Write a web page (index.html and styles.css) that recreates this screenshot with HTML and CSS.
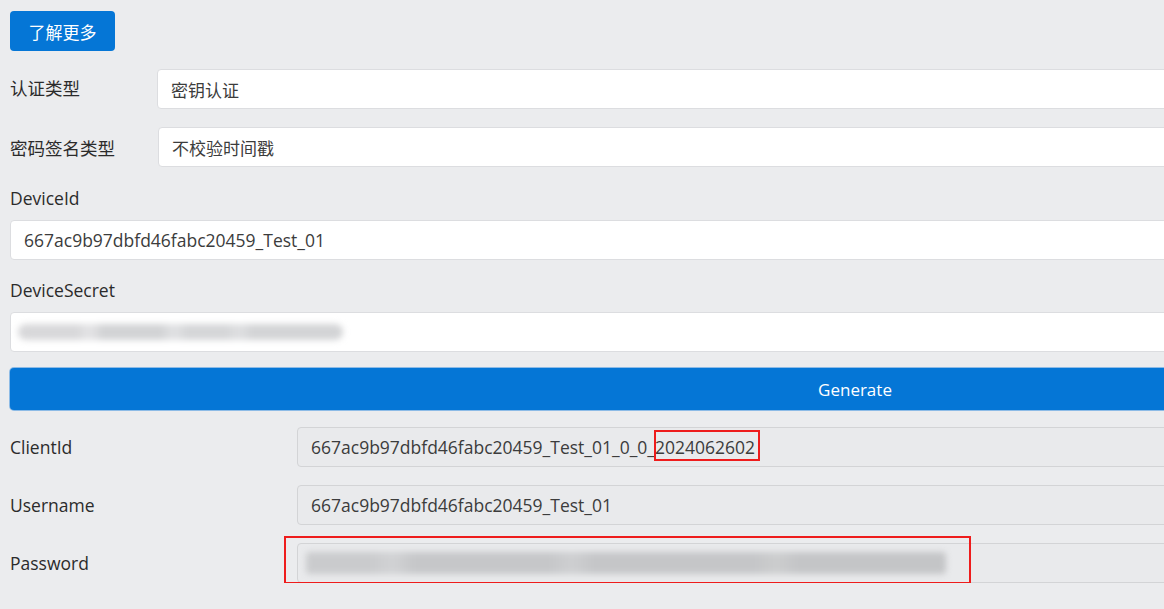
FILE: index.html
```html
<!DOCTYPE html>
<html lang="zh-CN">
<head>
    <meta charset="UTF-8">
    <meta name="viewport" content="width=device-width, initial-scale=1.0">
    <title>MQTT 签名生成</title>
    <link rel="stylesheet" href="styles.css">
</head>
<body>
<div class="page">
    <button class="btn btn-more" type="button">了解更多</button>

    <div class="row row-auth">
        <label class="row-label" for="authType">认证类型</label>
        <input class="field" id="authType" value="密钥认证" readonly>
    </div>
    <div class="row row-sign">
        <label class="row-label" for="signType">密码签名类型</label>
        <input class="field" id="signType" value="不校验时间戳" readonly>
    </div>

    <label class="block-label first" for="deviceId">DeviceId</label>
    <input class="field" id="deviceId" value="667ac9b97dbfd46fabc20459_Test_01">

    <label class="block-label" for="deviceSecret">DeviceSecret</label>
    <div class="field secret">
        <span class="smudge smudge-secret"></span>
    </div>

    <button class="btn btn-generate" type="button">Generate</button>

    <div class="row result">
        <label class="row-label" for="clientId">ClientId</label>
        <div class="field field-ro" id="clientId">667ac9b97dbfd46fabc20459_Test_01_0_0_<span class="mark">2024062602</span></div>
    </div>
    <div class="row result">
        <label class="row-label" for="username">Username</label>
        <div class="field field-ro" id="username">667ac9b97dbfd46fabc20459_Test_01</div>
    </div>
    <div class="row result">
        <label class="row-label" for="password">Password</label>
        <div class="field field-ro pwd" id="password">
            <span class="smudge smudge-pwd"></span>
            <span class="pwd-mark"></span>
        </div>
    </div>
</div>
</body>
</html>
```

FILE: styles.css
```css
html, body {
    margin: 0;
    overflow: hidden;
}

body {
    background-color: #ebecee;
    font-family: "Open Sans", "Noto Sans CJK SC", sans-serif;
    font-size: 17.5px;
    color: #2b2b2b;
}

.page {
    width: 1690px;
    padding: 11px 0 0 10px;
    display: flex;
    flex-direction: column;
    align-items: flex-start;
}

.btn {
    border: none;
    border-radius: 4px;
    background-color: #0576d6;
    color: #fff;
    font-family: inherit;
    font-size: 17px;
    cursor: pointer;
}

.btn-more {
    width: 105px;
    height: 40px;
}

.row {
    display: flex;
    align-items: center;
    width: 100%;
    margin-top: 18px;
}

.row-label {
    flex: 0 0 147px;
    font-size: 17.5px;
}

.row-auth .row-label {
    margin-top: -3px;
}

.row-sign .row-label {
    flex-basis: 148px;
}

.field {
    box-sizing: border-box;
    flex: 1;
    width: 100%;
    height: 40px;
    padding: 0 13px;
    border: 1px solid #dcdde0;
    border-radius: 4px;
    background-color: #fff;
    color: #3c3c3c;
    font-family: inherit;
    font-size: 17.5px;
    outline: none;
    display: flex;
    align-items: center;
}

.row-auth .field,
.row-sign .field {
    font-size: 17px;
}

.block-label {
    margin: 18px 0 10px;
    line-height: 24px;
}

.block-label.first {
    margin-top: 19px;
}

.block-label + .field {
    flex: none;
}

.secret {
    position: relative;
    padding-left: 7px;
}

/* blurred-out secret values */
.smudge {
    display: block;
    border-radius: 8px;
    filter: blur(3px);
}

.smudge-secret {
    width: 325px;
    height: 16px;
    background: linear-gradient(90deg, #d8d8da 0 18%, #e2e2e4 21% 23%, #d2d3d5 26% 44%, #dfe0e2 47% 49%, #d5d6d8 52% 64%, #dddee0 67% 69%, #d3d4d6 72% 100%);
}

.btn-generate {
    width: 100%;
    height: 42px;
    margin-top: 16px;
    box-shadow: 0 0 0 1px #8dbbe6;
}

.row.result {
    margin-top: 18px;
}

.result .row-label {
    flex-basis: 287px;
}

.btn-generate + .result {
    margin-top: 17px;
}

.field-ro {
    background-color: #e9eaec;
    border-color: #d3d4d6;
    position: relative;
}

.mark {
    position: relative;
}

.mark::after {
    content: "";
    position: absolute;
    left: -1px;
    right: -5px;
    top: -5px;
    bottom: -2px;
    border: 2px solid #ee1c1c;
}

.pwd {
    padding-left: 8px;
}

.smudge-pwd {
    width: 640px;
    height: 22px;
    border-radius: 4px;
    background: linear-gradient(90deg, #cacbcd 0 10%, #d0d1d3 13% 14%, #c6c7c9 17% 38%, #cdced0 41% 42%, #c5c6c8 45% 70%, #cbcccd 73% 74%, #c4c5c7 77% 100%);
}

.pwd-mark {
    position: absolute;
    left: -14px;
    top: -8px;
    width: 687px;
    height: 48px;
    box-sizing: border-box;
    border: 2px solid #ee1c1c;
}
```
